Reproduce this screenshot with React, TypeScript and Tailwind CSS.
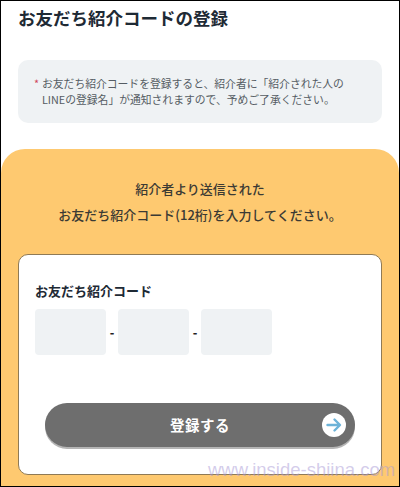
const font = { fontFamily: '"Noto Sans CJK JP", "Noto Sans", sans-serif' };

function CodeBox() {
  return <div className="h-[46px] w-[71px] rounded-[4px] bg-[#eff2f4]" />;
}

function Dash() {
  return <span className="w-[12px] text-center text-[12px] font-black text-[#222]">-</span>;
}

export default function App() {
  return (
    <div
      style={font}
      className="relative flex h-[487px] w-[400px] flex-col overflow-hidden border border-black bg-white"
    >
      <h1 className="mt-[3px] pl-[17px] text-[17.5px] leading-[28px] font-bold text-[#1e2a35]">
        お友だち紹介コードの登録
      </h1>

      <div className="mx-[17px] mt-[28px] flex h-[63px] items-start rounded-[10px] bg-[#eff2f4] pt-[15px] pl-[16px] text-[10.8px] leading-[16px] text-[#555c63]">
        <span className="w-[8px] shrink-0 text-[#d0455a]">*</span>
        <p>
          お友だち紹介コードを登録すると、紹介者に「紹介された人の
          <br />
          LINEの登録名」が通知されますので、予めご了承ください。
        </p>
      </div>

      <section className="mt-[26px] flex-1 rounded-t-[24px] bg-[#fec970] px-[17px] pt-[27px]">
        <p className="text-center text-[13px] leading-[26px] font-medium text-[#3b3a34]">
          紹介者より送信された
          <br />
          お友だち紹介コード(12桁)を入力してください。
        </p>

        <div className="mt-[26px] h-[221px] rounded-[10px] border border-[#8f7a55] bg-white px-[16px] pt-[26px]">
          <h2 className="text-[13px] leading-[20px] font-bold text-[#1e2a35]">お友だち紹介コード</h2>
          <div className="mt-[8px] flex items-center">
            <CodeBox />
            <Dash />
            <CodeBox />
            <Dash />
            <CodeBox />
          </div>

          <button className="relative mt-[48px] ml-[10px] flex h-[44px] w-[310px] items-center justify-center rounded-full bg-[#6e6e6e] text-[14.5px] font-bold tracking-[0.5px] text-white shadow-[0_2px_0_#b5b5b5]">
            登録する
            <span className="absolute top-[10px] right-[9px] flex h-[24px] w-[24px] items-center justify-center rounded-full bg-white">
              <svg width="18" height="18" viewBox="0 0 18 18" fill="none" stroke="#6db3d8" strokeWidth="2.4" strokeLinecap="round" strokeLinejoin="round">
                <path d="M2.5 9h12M9.5 3.5 15 9l-5.5 5.5" />
              </svg>
            </span>
          </button>
        </div>
      </section>

      <span
        style={{ fontFamily: '"Liberation Sans", sans-serif' }}
        className="absolute top-[459px] left-[207px] text-[18.5px] leading-[20px] font-light text-[#a99ad6]/50"
      >
        www.inside-shiina.com
      </span>
    </div>
  );
}
